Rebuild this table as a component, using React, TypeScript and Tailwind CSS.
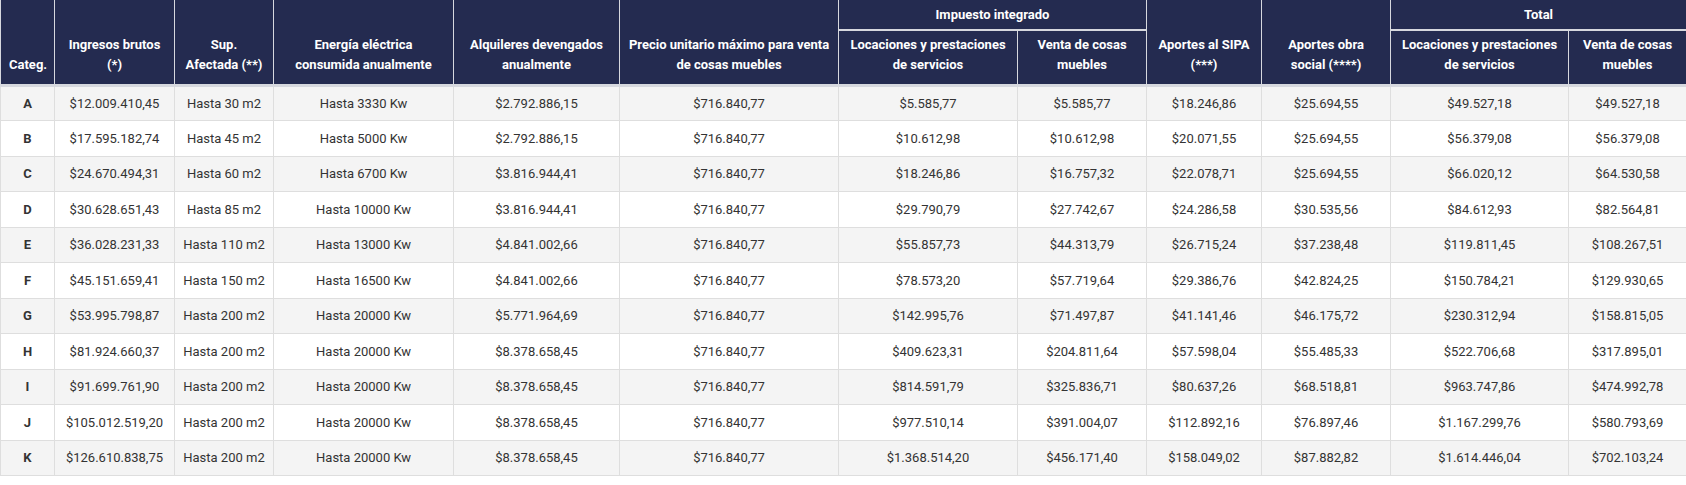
const widths = [54, 120, 99, 180, 166, 219, 179, 129, 115, 129, 178, 118];

const rows: string[][] = [
  ["A", "$12.009.410,45", "Hasta 30 m2", "Hasta 3330 Kw", "$2.792.886,15", "$716.840,77", "$5.585,77", "$5.585,77", "$18.246,86", "$25.694,55", "$49.527,18", "$49.527,18"],
  ["B", "$17.595.182,74", "Hasta 45 m2", "Hasta 5000 Kw", "$2.792.886,15", "$716.840,77", "$10.612,98", "$10.612,98", "$20.071,55", "$25.694,55", "$56.379,08", "$56.379,08"],
  ["C", "$24.670.494,31", "Hasta 60 m2", "Hasta 6700 Kw", "$3.816.944,41", "$716.840,77", "$18.246,86", "$16.757,32", "$22.078,71", "$25.694,55", "$66.020,12", "$64.530,58"],
  ["D", "$30.628.651,43", "Hasta 85 m2", "Hasta 10000 Kw", "$3.816.944,41", "$716.840,77", "$29.790,79", "$27.742,67", "$24.286,58", "$30.535,56", "$84.612,93", "$82.564,81"],
  ["E", "$36.028.231,33", "Hasta 110 m2", "Hasta 13000 Kw", "$4.841.002,66", "$716.840,77", "$55.857,73", "$44.313,79", "$26.715,24", "$37.238,48", "$119.811,45", "$108.267,51"],
  ["F", "$45.151.659,41", "Hasta 150 m2", "Hasta 16500 Kw", "$4.841.002,66", "$716.840,77", "$78.573,20", "$57.719,64", "$29.386,76", "$42.824,25", "$150.784,21", "$129.930,65"],
  ["G", "$53.995.798,87", "Hasta 200 m2", "Hasta 20000 Kw", "$5.771.964,69", "$716.840,77", "$142.995,76", "$71.497,87", "$41.141,46", "$46.175,72", "$230.312,94", "$158.815,05"],
  ["H", "$81.924.660,37", "Hasta 200 m2", "Hasta 20000 Kw", "$8.378.658,45", "$716.840,77", "$409.623,31", "$204.811,64", "$57.598,04", "$55.485,33", "$522.706,68", "$317.895,01"],
  ["I", "$91.699.761,90", "Hasta 200 m2", "Hasta 20000 Kw", "$8.378.658,45", "$716.840,77", "$814.591,79", "$325.836,71", "$80.637,26", "$68.518,81", "$963.747,86", "$474.992,78"],
  ["J", "$105.012.519,20", "Hasta 200 m2", "Hasta 20000 Kw", "$8.378.658,45", "$716.840,77", "$977.510,14", "$391.004,07", "$112.892,16", "$76.897,46", "$1.167.299,76", "$580.793,69"],
  ["K", "$126.610.838,75", "Hasta 200 m2", "Hasta 20000 Kw", "$8.378.658,45", "$716.840,77", "$1.368.514,20", "$456.171,40", "$158.049,02", "$87.882,82", "$1.614.446,04", "$702.103,24"],
];

const th = "border-x border-[#d6d8de] px-2 pb-[9px] align-bottom font-bold leading-5 text-white";

export default function App() {
  return (
    <div className="w-[1686px] bg-white font-['Roboto',sans-serif] text-[13px]">
      <table className="w-full table-fixed border-collapse">
        <colgroup>
          {widths.map((w, i) => (
            <col key={i} style={{ width: w }} />
          ))}
        </colgroup>
        <thead className="bg-[#242b50]">
          <tr className="h-[30px]">
            <th rowSpan={2} className={th}>Categ.</th>
            <th rowSpan={2} className={th}>Ingresos brutos<br />(*)</th>
            <th rowSpan={2} className={th}>Sup.<br />Afectada (**)</th>
            <th rowSpan={2} className={th}>Energía eléctrica<br />consumida anualmente</th>
            <th rowSpan={2} className={th}>Alquileres devengados<br />anualmente</th>
            <th rowSpan={2} className={th}>Precio unitario máximo para venta<br />de cosas muebles</th>
            <th colSpan={2} className="border-x border-b-2 border-[#d6d8de] px-2 align-middle font-bold leading-5 text-white">Impuesto integrado</th>
            <th rowSpan={2} className={th}>Aportes al SIPA<br />(***)</th>
            <th rowSpan={2} className={th}>Aportes obra<br />social (****)</th>
            <th colSpan={2} className="border-x border-b-2 border-[#d6d8de] px-2 align-middle font-bold leading-5 text-white">Total</th>
          </tr>
          <tr className="h-[55px] border-b-[3px] border-[#d6d8de]">
            <th className={th}>Locaciones y prestaciones<br />de servicios</th>
            <th className={th}>Venta de cosas<br />muebles</th>
            <th className={th}>Locaciones y prestaciones<br />de servicios</th>
            <th className={th}>Venta de cosas<br />muebles</th>
          </tr>
        </thead>
        <tbody>
          {rows.map((r, i) => (
            <tr key={r[0]} className={i % 2 === 0 ? "h-[35.5px] bg-[#f4f4f4]" : "h-[35.5px] bg-white"}>
              {r.map((c, j) => (
                <td
                  key={j}
                  className={
                    j === 0
                      ? "border border-[#dedede] px-2 text-center font-bold text-[#333]"
                      : "border border-[#dedede] px-2 text-center text-[#333]"
                  }
                >
                  {c}
                </td>
              ))}
            </tr>
          ))}
        </tbody>
      </table>
    </div>
  );
}
